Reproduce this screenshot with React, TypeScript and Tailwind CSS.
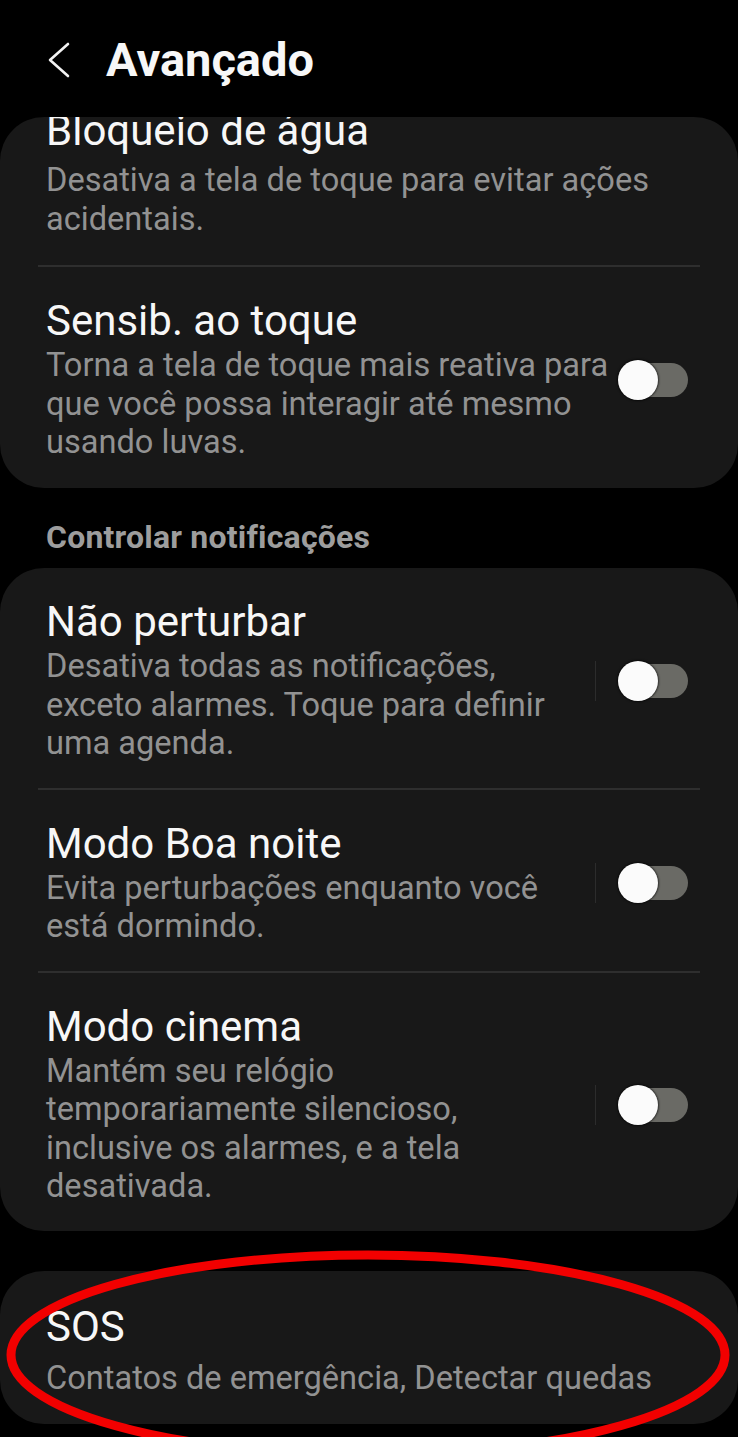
import React from 'react';

type Item = {
  title: string;
  lines: string[];
  toggle?: boolean;
  divider?: boolean;
};

const font = { fontFamily: 'Roboto, "Noto Sans", sans-serif' };

const Toggle: React.FC<{ divider?: boolean }> = ({ divider }) => (
  <div className="flex items-center shrink-0">
    {divider && <div className="w-px h-[40px] bg-[#2c2c2c] mr-[22px]" />}
    <div className="relative w-[70px] h-[40px] flex items-center">
      <div className="absolute right-0 w-[64px] h-[34px] rounded-full bg-[#6a6a65]" />
      <div className="absolute left-0 w-[40px] h-[40px] rounded-full bg-[#fbfbfb] shadow-[0_0_2px_1px_rgba(0,0,0,0.6)]" />
    </div>
  </div>
);

// toggle rows sit a little tighter than plain rows
const Row: React.FC<{ item: Item; last?: boolean; plain?: boolean }> = ({ item, last, plain }) => (
  <div className="pl-[46px] pr-[50px]">
    <div className={`flex items-center justify-between pt-[31px] ${plain ? 'pb-[27px]' : 'pb-[25px]'}`}>
      <div className="flex flex-col whitespace-nowrap">
        <div className="text-[42px] leading-[46px] text-[#f7f7f7]">{item.title}</div>
        <div className={`${plain ? 'mt-[7px]' : 'mt-[2px]'} text-[32.6px] leading-[38.5px] text-[#929292]`}>
          {item.lines.map((l, i) => (
            <div key={i}>{l}</div>
          ))}
        </div>
      </div>
      {item.toggle && <Toggle divider={item.divider} />}
    </div>
    {!last && <div className="h-[2px] bg-[#2e2e2e] -ml-[8px] -mr-[12px]" />}
  </div>
);

const notifications: Item[] = [
  {
    title: 'Não perturbar',
    lines: ['Desativa todas as notificações,', 'exceto alarmes. Toque para definir', 'uma agenda.'],
    toggle: true,
    divider: true,
  },
  {
    title: 'Modo Boa noite',
    lines: ['Evita perturbações enquanto você', 'está dormindo.'],
    toggle: true,
    divider: true,
  },
  {
    title: 'Modo cinema',
    lines: ['Mantém seu relógio', 'temporariamente silencioso,', 'inclusive os alarmes, e a tela', 'desativada.'],
    toggle: true,
    divider: true,
  },
];

export default function App() {
  return (
    <div className="relative w-[738px] h-[1437px] bg-black overflow-hidden" style={font}>
      {/* Header */}
      <div className="h-[117px] flex items-center pl-[46px] pt-[3px]">
        <svg width="26" height="38" viewBox="0 0 26 38" className="mr-[34px]">
          <polyline points="22,3 4,19 22,35" fill="none" stroke="#f2f2f2" strokeWidth="2.6" strokeLinecap="round" strokeLinejoin="round" />
        </svg>
        <div className="text-[47px] leading-[56px] font-bold text-[#f7f7f7]">Avançado</div>
      </div>

      {/* Scrolled card */}
      <div className="h-[371px] rounded-[44px] bg-[#181818] overflow-hidden">
        <div className="-mt-[40px]">
          <Row
            item={{ title: 'Bloqueio de água', lines: ['Desativa a tela de toque para evitar ações', 'acidentais.'] }}
            plain
          />
          <Row
            item={{
              title: 'Sensib. ao toque',
              lines: ['Torna a tela de toque mais reativa para', 'que você possa interagir até mesmo', 'usando luvas.'],
              toggle: true,
            }}
            last
          />
        </div>
      </div>

      {/* Section */}
      <div className="px-[46px] mt-[31px] mb-[13px] text-[32px] leading-[36px] font-bold text-[#9d9d9d] tracking-[0.2px]">
        Controlar notificações
      </div>

      <div className="rounded-[44px] bg-[#181818]">
        {notifications.map((n, i) => (
          <Row key={n.title} item={n} last={i === notifications.length - 1} />
        ))}
      </div>

      <div className="mt-[40px] rounded-[44px] bg-[#181818] h-[153px] px-[46px] pt-[33px]">
        <div className="text-[42px] leading-[46px] text-[#f7f7f7]">SOS</div>
        <div className="mt-[9px] text-[32.6px] leading-[38.5px] text-[#929292]">
          Contatos de emergência, Detectar quedas
        </div>
      </div>

      {/* Red annotation */}
      <svg className="absolute left-0 top-0 pointer-events-none" width="738" height="1437">
        <ellipse cx="368" cy="1355" rx="357" ry="100" fill="none" stroke="#f20000" strokeWidth="9" />
      </svg>
    </div>
  );
}
